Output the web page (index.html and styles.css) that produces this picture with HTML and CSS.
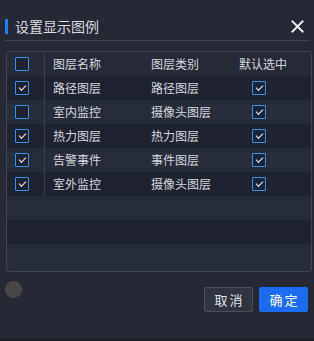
FILE: index.html
```html
<!DOCTYPE html>
<html lang="zh">
<head>
<meta charset="utf-8">
<link rel="stylesheet" href="styles.css">
</head>
<body>
<div class="dialog">
  <div class="head">
    <span class="bar"></span>
    <span class="title">设置显示图例</span>
    <svg class="close" width="13" height="13" viewBox="0 0 13 13"><path d="M1.5 1.5L11.5 11.5M11.5 1.5L1.5 11.5" stroke="#e6e8ee" stroke-width="2" stroke-linecap="square"/></svg>
  </div>
  <div class="table">
    <div class="row hd">
      <div class="c1"><span class="cb"></span></div>
      <div class="c2">图层名称</div>
      <div class="c3">图层类别</div>
      <div class="c4 t">默认选中</div>
    </div>
    <div class="row dark">
      <div class="c1"><span class="cb on"></span></div>
      <div class="c2">路径图层</div>
      <div class="c3">路径图层</div>
      <div class="c4"><span class="cb on"></span></div>
    </div>
    <div class="row light">
      <div class="c1"><span class="cb"></span></div>
      <div class="c2">室内监控</div>
      <div class="c3">摄像头图层</div>
      <div class="c4"><span class="cb on"></span></div>
    </div>
    <div class="row dark">
      <div class="c1"><span class="cb on"></span></div>
      <div class="c2">热力图层</div>
      <div class="c3">热力图层</div>
      <div class="c4"><span class="cb on"></span></div>
    </div>
    <div class="row light">
      <div class="c1"><span class="cb on"></span></div>
      <div class="c2">告警事件</div>
      <div class="c3">事件图层</div>
      <div class="c4"><span class="cb on"></span></div>
    </div>
    <div class="row dark">
      <div class="c1"><span class="cb on"></span></div>
      <div class="c2">室外监控</div>
      <div class="c3">摄像头图层</div>
      <div class="c4"><span class="cb on"></span></div>
    </div>
    <div class="filler light"></div>
    <div class="filler dark"></div>
  </div>
  <div class="foot">
    <span class="dot"></span>
    <div class="btns">
      <button class="btn cancel">取消</button>
      <button class="btn ok">确定</button>
    </div>
  </div>
</div>
</body>
</html>
```
FILE: styles.css
```css
html, body {
  margin: 0;
  padding: 0;
  background: #262834;
  font-family: "Noto Sans CJK SC", "Noto Sans", sans-serif;
  color: #d3d6dd;
}
.dialog {
  width: 314px;
  height: 341px;
  box-sizing: border-box;
  border-bottom: 2px solid #1d1f27;
}
.head {
  display: flex;
  align-items: center;
  margin: 0 4px 0 5px;
  padding-top: 12px;
  height: 28px;
  border-bottom: 1px solid #3d4150;
}
.bar {
  width: 3px;
  height: 15px;
  background: #1f80f5;
  margin-right: 7px;
}
.title {
  font-size: 14px;
  color: #d9dbe1;
  flex: 1;
  line-height: 16px;
}
.close {
  margin-right: 6px;
}
.table {
  margin: 10px 2px 0 6px;
  height: 221px;
  box-sizing: border-box;
  border: 1px solid #3e4456;
  border-radius: 3px;
  background: #272c39;
  overflow: hidden;
  font-size: 12px;
}
.row {
  display: grid;
  grid-template-columns: 38px 99px 87px 1fr;
  height: 24px;
  align-items: stretch;
}
.row > div {
  display: flex;
  align-items: center;
  box-sizing: border-box;
  line-height: 16px;
}
.hd { background: #262a36; }
.dark { background: #1f2330; }
.light { background: #272c39; }
.filler { height: 24px; }
.c1 {
  padding-left: 8px;
  border-right: 1px solid #3a3f4e;
}
.c2 { padding-left: 8px; }
.c3 { padding-left: 7px; }
.c4 { padding-left: 21px; }
.c4.t { padding-left: 8px; }
.cb {
  display: block;
  width: 14px;
  height: 14px;
  box-sizing: border-box;
  border: 1px solid #3b8eea;
  border-radius: 1px;
  background: #1d2230;
  position: relative;
}
.cb.on::after {
  content: "";
  position: absolute;
  left: 3px;
  top: 2px;
  width: 6px;
  height: 3px;
  border-left: 1.5px solid #f2f4f8;
  border-bottom: 1.5px solid #f2f4f8;
  transform: rotate(-45deg);
  transform-origin: center;
  top: 3px;
}
.foot {
  display: flex;
  justify-content: space-between;
  align-items: flex-start;
  margin-top: 9px;
  padding: 0 6px 0 5px;
}
.dot {
  width: 17px;
  height: 17px;
  border-radius: 50%;
  background: #494646;
}
.btns {
  display: flex;
  gap: 6px;
  margin-top: 6px;
}
.btn {
  width: 49px;
  height: 25px;
  box-sizing: border-box;
  font-family: "Noto Sans CJK SC", sans-serif;
  font-size: 13px;
  letter-spacing: 2px;
  padding: 0 0 0 2px;
  border-radius: 2px;
  line-height: 23px;
}
.cancel {
  background: #2f343f;
  border: 1px solid #4a505d;
  color: #e0e2e7;
}
.ok {
  background: #1c6cf2;
  border: 1px solid #1c6cf2;
  color: #ffffff;
}
```
